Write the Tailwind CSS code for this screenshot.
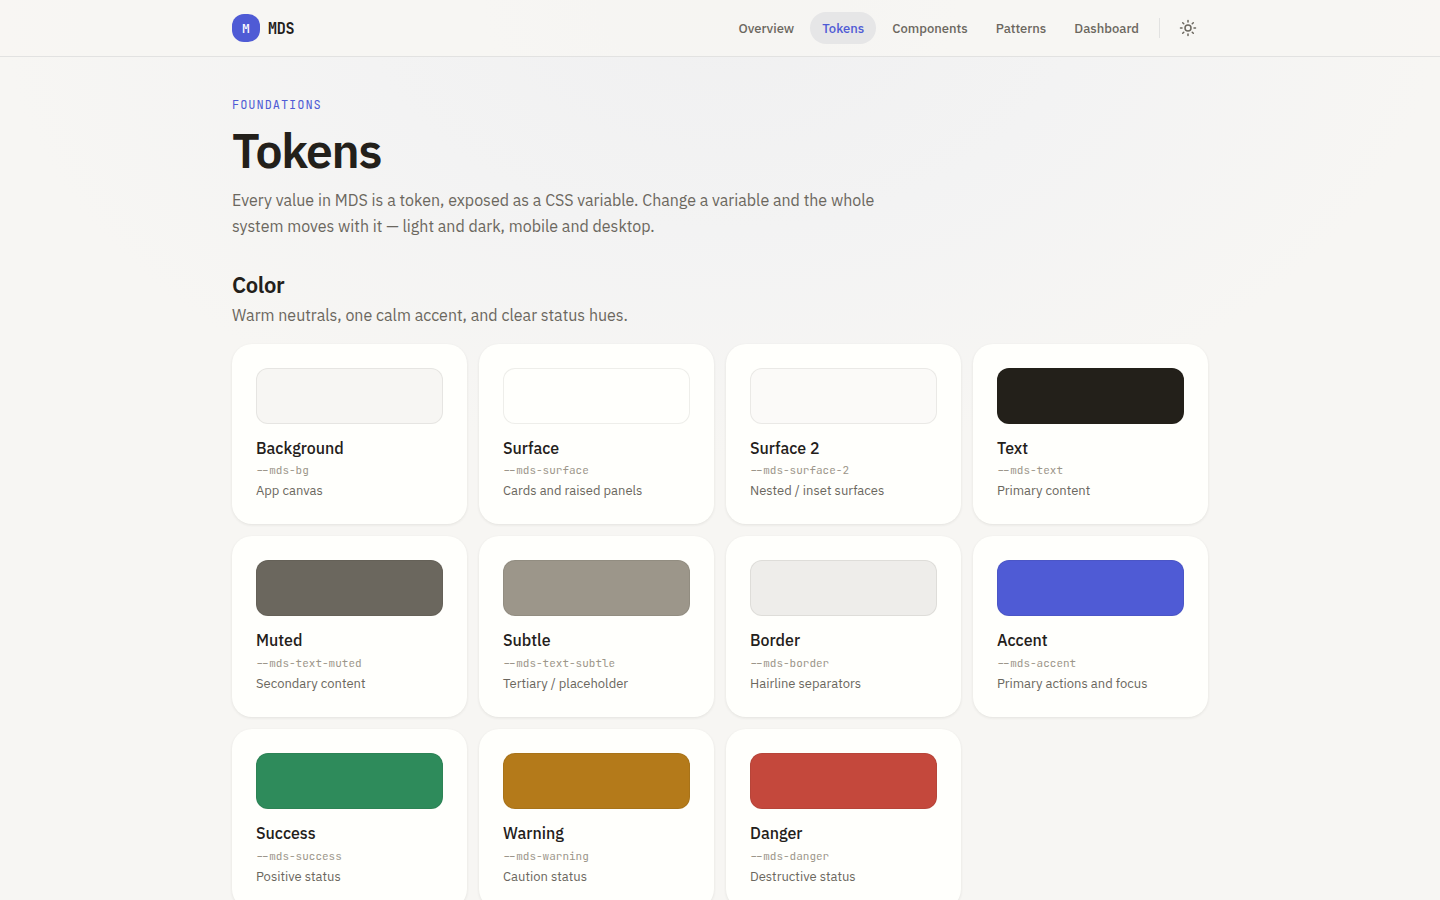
<!DOCTYPE html>
<html lang="en">
<head>
  <meta charset="UTF-8">
  <meta name="viewport" content="width=device-width, initial-scale=1.0">
  <title>Tokens - MDS</title>
  <script src="https://cdn.jsdelivr.net/npm/@tailwindcss/browser@4"></script>
</head>
<body class="h-screen overflow-hidden bg-[#f7f6f3] bg-[radial-gradient(ellipse_720px_460px_at_50%_0px,#f0f0f1_0%,#f3f3f3_50%,#f7f6f3_100%)] bg-no-repeat font-['IBM_Plex_Sans',Roboto,sans-serif] text-[#23201a] antialiased">
  <!-- Header -->
  <header class="h-[57px] border-b border-[#e2e2e1] bg-[#f7f6f3]/80">
    <div class="mx-auto flex h-14 w-[976px] items-center justify-between">
      <a href="#" class="flex items-center gap-2 font-['JetBrains_Mono','IBM_Plex_Mono','Liberation_Mono',monospace] font-medium">
        <span class="flex size-7 items-center justify-center rounded-xl bg-[#4f5bd5] pt-px text-[13px] text-white">M</span>
        <span class="pt-0.5 text-[15px] font-semibold tracking-[-0.3px]">MDS</span>
      </a>
      <nav class="flex items-center gap-1 text-[13px] font-medium text-[#6b675e]">
        <a href="#" class="flex h-8 items-center rounded-full px-3 pt-0.5">Overview</a>
        <a href="#" class="flex h-8 items-center rounded-full bg-[#e6e6e7] px-3 pt-0.5 text-[#4f5bd5]">Tokens</a>
        <a href="#" class="flex h-8 items-center rounded-full px-3 pt-0.5">Components</a>
        <a href="#" class="flex h-8 items-center rounded-full px-3 pt-0.5">Patterns</a>
        <a href="#" class="flex h-8 items-center rounded-full px-3 pt-0.5">Dashboard</a>
        <span class="mx-1 h-5 w-px bg-[#e2e2e1]"></span>
        <button class="flex size-10 items-center justify-center" aria-label="Toggle theme">
          <svg class="size-[18px]" viewBox="0 0 24 24" fill="none" stroke="currentColor" stroke-width="2" stroke-linecap="round">
            <circle cx="12" cy="12" r="4"/>
            <path d="M12 2v2M12 20v2M4.93 4.93l1.41 1.41M17.66 17.66l1.41 1.41M2 12h2M20 12h2M6.34 17.66l-1.41 1.41M19.07 4.93l-1.41 1.41"/>
          </svg>
        </button>
      </nav>
    </div>
  </header>

  <main class="mx-auto w-[976px] pt-[38px]">
    <!-- Page intro -->
    <p class="font-['JetBrains_Mono','IBM_Plex_Mono','Liberation_Mono',monospace] text-xs leading-5 tracking-[0.96px] text-[#4f5bd5]">FOUNDATIONS</p>
    <h1 class="mt-[9px] text-[48px] leading-[53px] font-semibold tracking-[-1.2px]">Tokens</h1>
    <p class="mt-2.5 text-base leading-[26px] text-[#6b675e]">Every value in MDS is a token, exposed as a CSS variable. Change a variable and the whole<br>system moves with it — light and dark, mobile and desktop.</p>

    <!-- Color -->
    <h2 class="mt-8 text-[22px] leading-7 font-semibold tracking-[-0.33px]">Color</h2>
    <p class="mt-[3px] text-base leading-[26px] text-[#6b675e]">Warm neutrals, one calm accent, and clear status hues.</p>

    <div id="swatches" class="mt-[15.6px] grid grid-cols-4 gap-3"></div>
  </main>

  <template id="card">
    <article class="h-[180.6px] rounded-[20px] bg-[#fffffc] p-6 shadow-[0_1px_3px_rgba(35,32,26,0.09)]">
      <div data-swatch class="h-14 rounded-xl border border-[#23201a]/8"></div>
      <h3 data-name class="mt-3 text-base leading-[25.6px] font-medium"></h3>
      <code data-token class="mt-[1.2px] block font-['JetBrains_Mono','IBM_Plex_Mono','Liberation_Mono',monospace] text-[11px] leading-[17.6px] text-[#9c968a]"></code>
      <p data-use class="mt-[1.4px] text-[13px] leading-[20.8px] text-[#6b675e]"></p>
    </article>
  </template>

  <script>
    const tokens = [
      ["Background", "--mds-bg", "App canvas", "#f7f6f3"],
      ["Surface", "--mds-surface", "Cards and raised panels", "#fffffc"],
      ["Surface 2", "--mds-surface-2", "Nested / inset surfaces", "#fbfaf8"],
      ["Text", "--mds-text", "Primary content", "#23201a"],
      ["Muted", "--mds-text-muted", "Secondary content", "#6b675e"],
      ["Subtle", "--mds-text-subtle", "Tertiary / placeholder", "#9c968a"],
      ["Border", "--mds-border", "Hairline separators", "#eeedea"],
      ["Accent", "--mds-accent", "Primary actions and focus", "#4f5bd5"],
      ["Success", "--mds-success", "Positive status", "#2e8b5b"],
      ["Warning", "--mds-warning", "Caution status", "#b47a1a"],
      ["Danger", "--mds-danger", "Destructive status", "#c4483c"],
    ];

    const grid = document.getElementById("swatches");
    const card = document.getElementById("card");

    tokens.forEach(([name, token, use, color]) => {
      const el = card.content.cloneNode(true);
      el.querySelector("[data-swatch]").style.backgroundColor = color;
      el.querySelector("[data-name]").textContent = name;
      el.querySelector("[data-token]").textContent = token;
      el.querySelector("[data-use]").textContent = use;
      grid.appendChild(el);
    });
  </script>
</body>
</html>
